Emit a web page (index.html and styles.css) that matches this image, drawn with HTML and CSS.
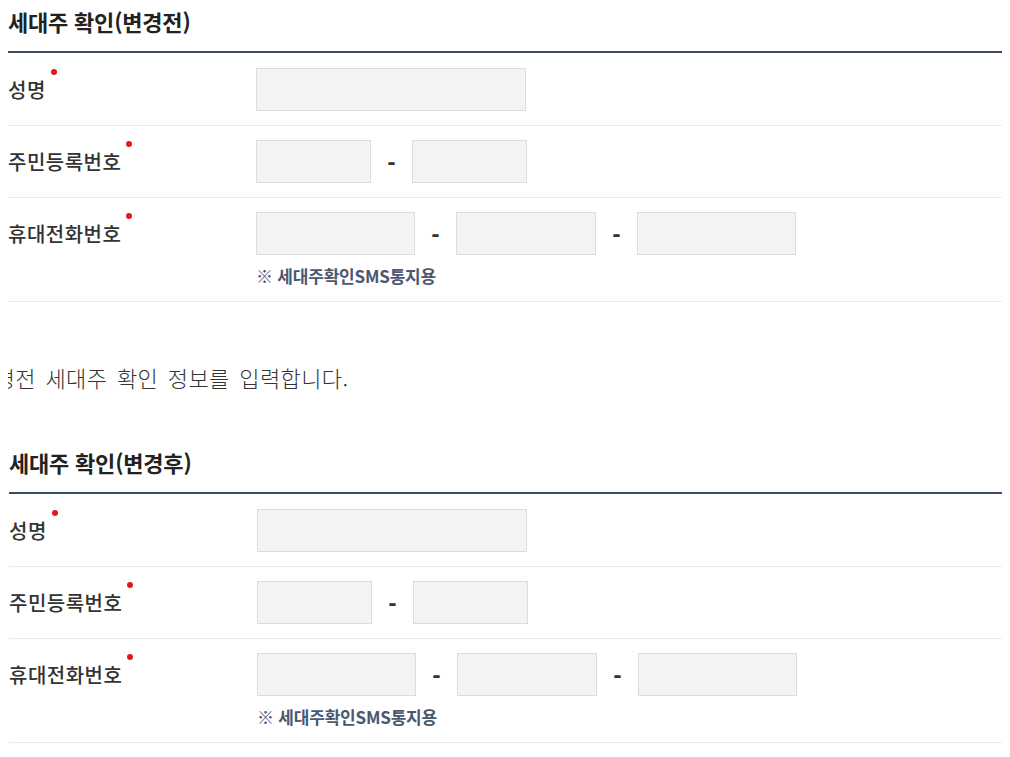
FILE: index.html
```html
<!DOCTYPE html>
<html lang="ko">
<head>
    <meta charset="UTF-8">
    <meta name="viewport" content="width=device-width,initial-scale=1.0">
    <title>세대주 확인</title>
    <link rel="stylesheet" href="styles.css">
</head>
<body>
    <div class="section">
        <h2 class="title">세대주 확인(변경전)</h2>
        <div class="row">
            <div class="label req">성명</div>
            <div class="field">
                <div class="inputs"><input type="text" class="box w270"></div>
            </div>
        </div>
        <div class="row">
            <div class="label req">주민등록번호</div>
            <div class="field">
                <div class="inputs">
                    <input type="text" class="box w115"><span class="dash">-</span><input type="password" class="box w115">
                </div>
            </div>
        </div>
        <div class="row">
            <div class="label req">휴대전화번호</div>
            <div class="field">
                <div class="inputs">
                    <input type="text" class="box w159"><span class="dash">-</span><input type="text" class="box w140"><span class="dash">-</span><input type="text" class="box w159">
                </div>
                <p class="note">※ 세대주확인SMS통지용</p>
            </div>
        </div>
    </div>

    <p class="desc">변경전 세대주 확인 정보를 입력합니다.</p>

    <div class="section after">
        <h2 class="title">세대주 확인(변경후)</h2>
        <div class="row">
            <div class="label req">성명</div>
            <div class="field">
                <div class="inputs"><input type="text" class="box w270"></div>
            </div>
        </div>
        <div class="row">
            <div class="label req">주민등록번호</div>
            <div class="field">
                <div class="inputs">
                    <input type="text" class="box w115"><span class="dash">-</span><input type="password" class="box w115">
                </div>
            </div>
        </div>
        <div class="row">
            <div class="label req">휴대전화번호</div>
            <div class="field">
                <div class="inputs">
                    <input type="text" class="box w159"><span class="dash">-</span><input type="text" class="box w140"><span class="dash">-</span><input type="text" class="box w159">
                </div>
                <p class="note">※ 세대주확인SMS통지용</p>
            </div>
        </div>
    </div>
</body>
</html>
```
FILE: styles.css
```css
body{margin: 0 8px;font-family: "Noto Sans CJK KR", "Noto Sans", sans-serif;color: #333;background: #fff;overflow: hidden;}
.section{padding-top: 6px;}
.section.after{margin-left: 1px;}
.title{margin: 0;padding-bottom: 15px;font-size: 22px;line-height: 30px;font-weight: 700;letter-spacing: -0.2px;color: #222;border-bottom: 2px solid #3d4a63;}
.row{display: flex;align-items: flex-start;padding: 14px 0;border-bottom: 1px solid #ebebeb;}
.row:first-of-type{padding-top: 15px;}
.label{position: relative;width: 248px;flex: none;font-size: 20px;line-height: 43px;font-weight: 500;letter-spacing: 0.5px;color: #333;}
.label.req::after{content: "";position: absolute;top: 1px;width: 6px;height: 6px;margin-left: 5px;border-radius: 50%;background: #e3161b;}
.field{flex: 1;}
.inputs{display: flex;align-items: center;}
.box{box-sizing: border-box;height: 43px;margin: 0;padding: 0 8px;border: 1px solid #dcdcdc;background: #f3f3f3;font-size: 15px;outline: none;}
.w270{width: 270px;}
.w115{width: 115px;}
.w140{width: 140px;}
.w159{width: 159px;}
.dash{width: 41px;text-align: center;font-size: 22px;font-weight: 900;color: #333;}
.note{margin: 10px 0 0;font-size: 17px;line-height: 22px;font-weight: 700;letter-spacing: -0.2px;color: #4b5872;}
.desc{margin: 60px 0 49px -34px;font-size: 22px;line-height: 30px;font-weight: 300;letter-spacing: 0.4px;word-spacing: 3px;color: #333;}
```
